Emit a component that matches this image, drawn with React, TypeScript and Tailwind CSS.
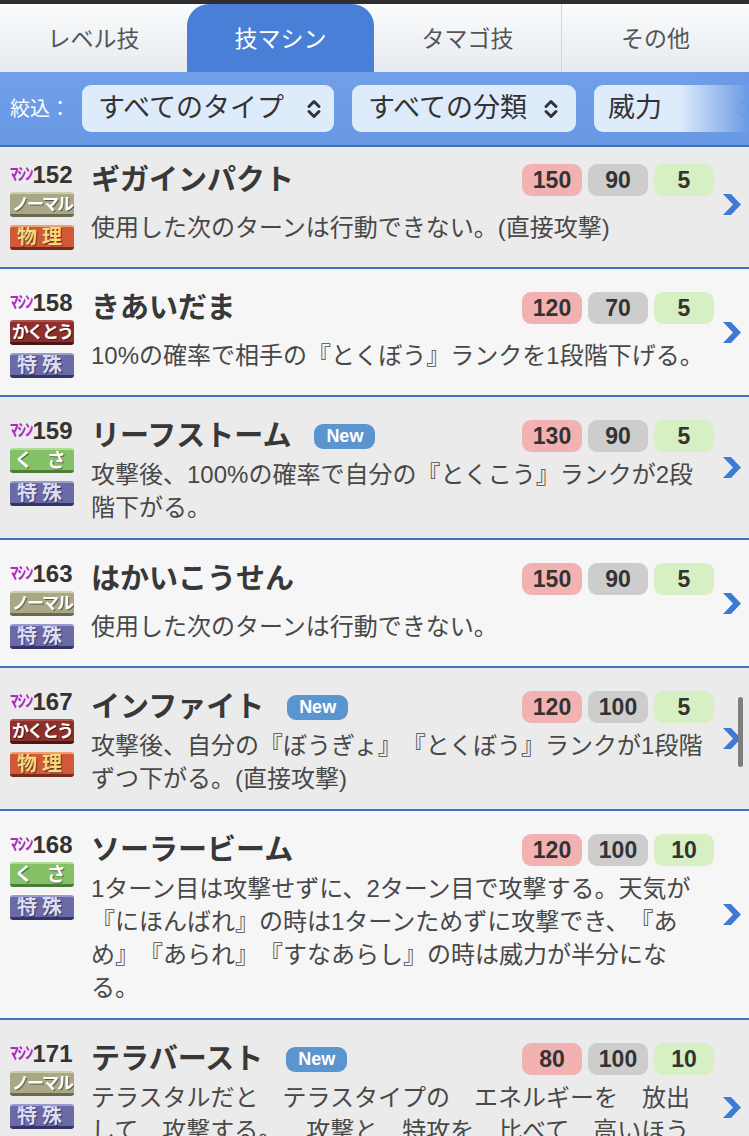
import React from 'react';

type TypeKey = 'normal' | 'fighting' | 'grass';
type CatKey = 'physical' | 'special';

type Move = {
  no: number;
  name: string;
  isNew?: boolean;
  type: TypeKey;
  cat: CatKey;
  power: number;
  acc: number;
  pp: number;
  desc: string;
};

const TYPES: Record<TypeKey, { label: string; cls: string }> = {
  normal: {
    label: 'ノーマル',
    cls: 'bg-[#a9a885] border-t-[#cfcdb0] border-b-[#6a694f] text-white text-[17px] tracking-[-2px]',
  },
  fighting: {
    label: 'かくとう',
    cls: 'bg-[#8d2f2a] border-t-[#b0504a] border-b-[#4b1613] text-white text-[17px] tracking-[-2px]',
  },
  grass: {
    label: 'く さ',
    cls: 'bg-[#84c066] border-t-[#b2dc98] border-b-[#4c7c36] text-white text-[19px] tracking-[4px]',
  },
};

const CATS: Record<CatKey, { label: string; cls: string }> = {
  physical: {
    label: '物理',
    cls: 'bg-[#d2583a] border-t-[#f0a070] border-b-[#7a2a18] text-[#f6d77c] text-[20px] tracking-[5px]',
  },
  special: {
    label: '特殊',
    cls: 'bg-[#6a6aa8] border-t-[#9a9ad0] border-b-[#34346a] text-[#dcdcf2] text-[20px] tracking-[5px]',
  },
};

const MOVES: Move[] = [
  { no: 152, name: 'ギガインパクト', type: 'normal', cat: 'physical', power: 150, acc: 90, pp: 5, desc: '使用した次のターンは行動できない。(直接攻撃)' },
  { no: 158, name: 'きあいだま', type: 'fighting', cat: 'special', power: 120, acc: 70, pp: 5, desc: '10%の確率で相手の『とくぼう』ランクを1段階下げる。' },
  { no: 159, name: 'リーフストーム', isNew: true, type: 'grass', cat: 'special', power: 130, acc: 90, pp: 5, desc: '攻撃後、100%の確率で自分の『とくこう』ランクが2段階下がる。' },
  { no: 163, name: 'はかいこうせん', type: 'normal', cat: 'special', power: 150, acc: 90, pp: 5, desc: '使用した次のターンは行動できない。' },
  { no: 167, name: 'インファイト', isNew: true, type: 'fighting', cat: 'physical', power: 120, acc: 100, pp: 5, desc: '攻撃後、自分の『ぼうぎょ』『とくぼう』ランクが1段階ずつ下がる。(直接攻撃)' },
  { no: 168, name: 'ソーラービーム', type: 'grass', cat: 'special', power: 120, acc: 100, pp: 10, desc: '1ターン目は攻撃せずに、2ターン目で攻撃する。天気が『にほんばれ』の時は1ターンためずに攻撃でき、『あめ』『あられ』『すなあらし』の時は威力が半分になる。' },
  { no: 171, name: 'テラバースト', isNew: true, type: 'normal', cat: 'special', power: 80, acc: 100, pp: 10, desc: 'テラスタルだと　テラスタイプの　エネルギーを　放出して　攻撃する。　攻撃と　特攻を　比べて　高いほうで　ダメージを　与える。' },
];

const TABS = ['レベル技', '技マシン', 'タマゴ技', 'その他'];

function UpDown({ faded }: { faded?: boolean }) {
  return (
    <svg width="16" height="22" viewBox="0 0 16 22" fill="none" stroke={faded ? '#a8c0e4' : '#333'} strokeWidth="3" strokeLinecap="round" strokeLinejoin="round">
      <path d="M3 8.5 8 3.5l5 5M3 13.5l5 5 5-5" />
    </svg>
  );
}

function Badge({ label, cls }: { label: string; cls: string }) {
  return (
    <div className={`flex h-[25px] w-[64px] items-center justify-center overflow-hidden whitespace-nowrap rounded-[3px] border-t-2 border-b-[3px] font-bold leading-none [text-shadow:1px_1px_0_rgba(0,0,0,0.5)] ${cls}`}>
      {label}
    </div>
  );
}

function MoveRow({ m, shade, first }: { m: Move; shade: boolean; first: boolean }) {
  const t = TYPES[m.type];
  const c = CATS[m.cat];
  return (
    <div className={`flex border-b-2 border-[#3b74ba] ${shade ? 'bg-[#ebebeb]' : 'bg-[#f6f6f6]'} ${first ? '-mt-[6px]' : ''}`}>
      {/* number + badges */}
      <div className="flex w-[91px] shrink-0 flex-col items-start pl-[10px] pt-[18px] pb-[16px]">
        <div className="flex h-[28px] items-end leading-none">
          <span className="mb-[4px] text-[17px] font-bold tracking-[-1px] text-[#a82cc0]">ﾏｼﾝ</span>
          <span className="text-[24px] font-bold text-[#333]">{m.no}</span>
        </div>
        <div className="mt-[5px]">
          <Badge label={t.label} cls={t.cls} />
        </div>
        <div className="mt-[8px]">
          <Badge label={c.label} cls={c.cls} />
        </div>
      </div>

      {/* name, stats, description */}
      <div className="flex min-h-[126px] flex-1 flex-col pt-[17px] pb-[14px]">
        <div className="flex h-[44px] items-center">
          <span className="text-[29px] font-bold leading-none text-[#383838]">{m.name}</span>
          {m.isNew && (
            <span className="ml-[23px] flex h-[25px] w-[61px] items-center justify-center rounded-[9px] bg-[#5b95d0] text-[18px] font-bold text-white">
              New
            </span>
          )}
          <div className="ml-auto flex gap-[6px] text-[23px] font-bold text-[#333]">
            <span className="flex h-[32px] w-[60px] items-center justify-center rounded-[9px] bg-[#f2b2b2]">{m.power}</span>
            <span className="flex h-[32px] w-[60px] items-center justify-center rounded-[9px] bg-[#cdcdcd]">{m.acc}</span>
            <span className="flex h-[32px] w-[60px] items-center justify-center rounded-[9px] bg-[#d6f0c4]">{m.pp}</span>
          </div>
        </div>
        <div className="flex flex-1 flex-col justify-center pr-[6px]">
          <p className="text-[24px] leading-[33px] text-[#484848]">{m.desc}</p>
        </div>
      </div>

      <div className="flex w-[35px] shrink-0 items-center justify-center">
        <svg width="20" height="21" viewBox="0 0 20 21">
          <path d="M1 0h8l10 10.5L9 21H1l10-10.5z" fill="#3c7ad6" />
        </svg>
      </div>
    </div>
  );
}

export default function App() {
  return (
    <div className="relative h-[1136px] w-[749px] overflow-hidden bg-[#f6f6f6] font-['Liberation_Sans','Noto_Sans_CJK_JP',sans-serif] [text-spacing-trim:space-all]">
      <div className="h-[4px] bg-[#2e2e2e]" />

      {/* tabs */}
      <div className="flex h-[68px] bg-gradient-to-b from-[#fbfcfd] to-[#e6eaef]">
        {TABS.map((tab, i) => (
          <div
            key={tab}
            className={`flex flex-1 items-center justify-center pt-[2px] text-[23px] ${
              i === 1 ? 'rounded-t-[22px] bg-[#4a7fd8] text-white' : 'text-[#555]'
            } ${i === 3 ? 'border-l border-[#d2d6db]' : ''}`}
          >
            {tab}
          </div>
        ))}
      </div>

      {/* filters */}
      <div className="relative flex h-[75px] items-center gap-[18px] overflow-hidden border-b-2 border-[#3b74ba] bg-gradient-to-b from-[#70a0ea] to-[#6898e3] pl-[10px]">
        <span className="-mr-[6px] shrink-0 text-[20px] text-white">絞込：</span>
        <div className="flex h-[47px] w-[252px] shrink-0 items-center justify-between rounded-[9px] bg-[#deebfb] pl-[16px] pr-[12px] text-[27px] text-[#333]">
          すべてのタイプ <UpDown />
        </div>
        <div className="flex h-[47px] w-[224px] shrink-0 items-center justify-between rounded-[9px] bg-[#deebfb] pl-[16px] pr-[17px] text-[27px] text-[#333]">
          すべての分類 <UpDown />
        </div>
        <div className="flex h-[47px] w-[165px] shrink-0 items-center justify-between rounded-[9px] bg-[#deebfb] pl-[14px] pr-[8px] text-[27px] text-[#333]">
          威力 <UpDown faded />
        </div>
        <div className="absolute right-0 top-0 h-full w-[70px] bg-gradient-to-r from-transparent to-[#6a9ae5]" />
      </div>

      {/* move list */}
      <div className="overflow-hidden">
        {MOVES.map((m, i) => (
          <MoveRow key={m.no} m={m} shade={i % 2 === 0} first={i === 0} />
        ))}
      </div>

      {/* scroll indicator */}
      <div className="absolute left-[738px] top-[697px] h-[70px] w-[5px] rounded-full bg-[#7e7e7e]" />
    </div>
  );
}
